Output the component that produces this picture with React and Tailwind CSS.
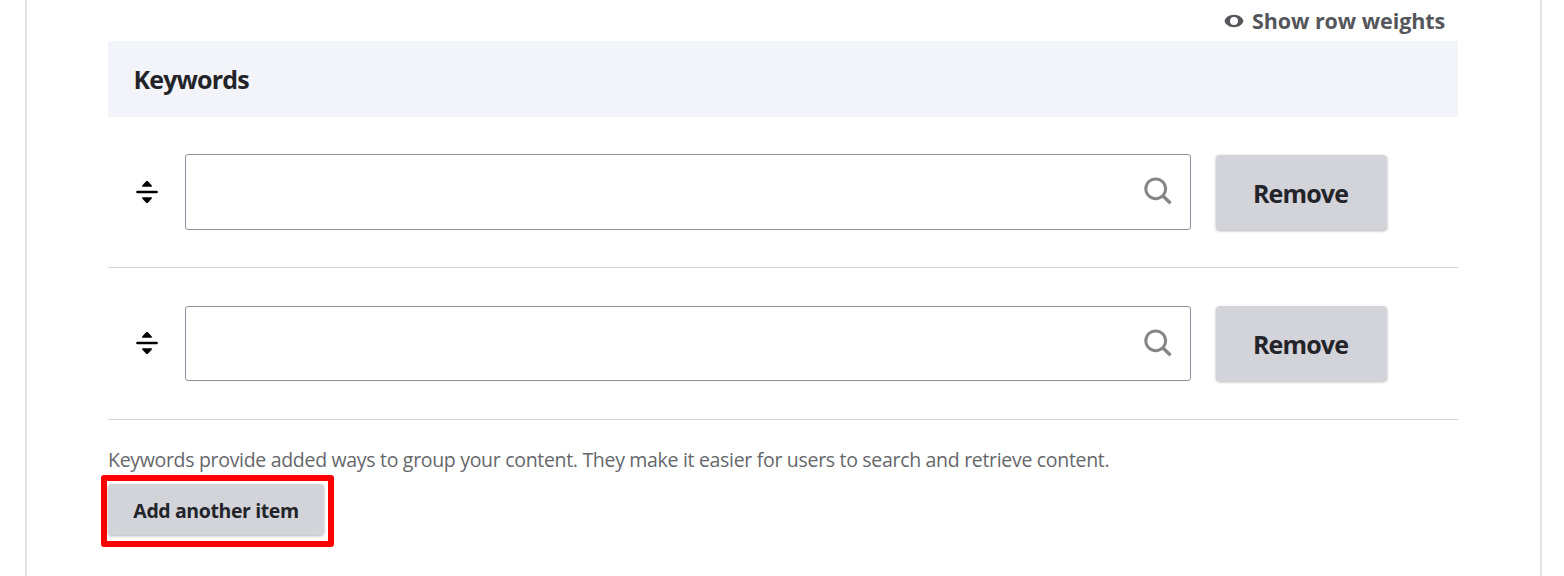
function EyeIcon() {
  return (
    <svg className="block h-[14px] w-5" viewBox="0 0 20 14" aria-hidden="true">
      <path
        fill="#55565b"
        fillRule="evenodd"
        d="M10 .8C5.200.8 1.300 3.600.6 7c.7 3.400 4.600 6.200 9.400 6.200s8.700-2.800 9.400-6.200C18.700 3.600 14.800.8 10 .8Zm0 2.200a4 4 0 1 1 0 8a4 4 0 0 1 0-8Z"
      />
    </svg>
  );
}

function DragIcon() {
  return (
    <svg className="block h-6 w-6" viewBox="0 0 24 24" aria-hidden="true">
      <path
        fill="#000"
        d="M12 1c.4 0 .7.100.9.300l3.700 3.900c.7.800.3 1.500-.6 1.500H8c-.9 0-1.300-.7-.6-1.500l3.700-3.900c.2-.2.500-.3.900-.3ZM12 23c.4 0 .7-.1.900-.3l3.700-3.900c.7-.8.300-1.500-.6-1.500H8c-.9 0-1.300.7-.6 1.500l3.700 3.900c.2.200.5.300.9.300Z"
      />
      <rect x="1.200" y="10.700" width="21.600" height="2.600" rx="1.100" fill="#000" />
    </svg>
  );
}

function SearchIcon() {
  return (
    <svg className="block h-[30px] w-[30px]" viewBox="0 0 30 30" fill="none" stroke="#868686" aria-hidden="true">
      <circle cx="12.700" cy="12.800" r="9.900" strokeWidth="3" />
      <path d="M19.500 19.600l8 7.600" strokeWidth="3.400" />
    </svg>
  );
}

function KeywordRow({ className, handleClassName, inputClassName, buttonClassName }) {
  return (
    <div className={`flex items-start border-b border-[#d3d4d9] ${className}`}>
      <div className={`ml-[27px] w-[50px] ${handleClassName}`}>
        <DragIcon />
      </div>
      <div
        className={`flex w-[1006px] justify-end rounded-[3px] border border-[#8e929c] bg-white pr-[17px] pt-[21px] ${inputClassName}`}
      >
        <SearchIcon />
      </div>
      <button
        className={`ml-[25px] w-[171px] rounded-[4px] bg-[#d3d4d9] pr-[2px] text-[25px] leading-[34px] font-bold tracking-[-0.85px] text-[#232429] shadow-[0_1px_3px_rgba(0,0,0,0.3)] ${buttonClassName}`}
      >
        Remove
      </button>
    </div>
  );
}

export default function App() {
  return (
    <div className="h-[576px] overflow-hidden bg-white pl-[25px] font-['Open_Sans','Noto_Sans',sans-serif]">
      <main className="h-full w-[1517px] border-x-2 border-[#e2e2e4] pl-[81px]">
        <div className="w-[1350px]">
          <div className="flex h-[41px] items-start justify-end pr-[13px]">
            <div className="mr-[8px] mt-[14px]">
              <EyeIcon />
            </div>
            <span className="mt-[7px] w-[193px] whitespace-nowrap text-[21.500px] leading-[28px] font-bold tracking-[-0.07px] text-[#55565b]">
              Show row weights
            </span>
          </div>
          <div className="flex h-[76px] items-center bg-[#f3f4f9] pl-[25.500px] pt-[2px] text-[25px] font-bold tracking-[-0.85px] text-[#232429]">
            Keywords
          </div>
          <KeywordRow
            className="h-[151px] pt-[37px]"
            handleClassName="mt-[26px]"
            inputClassName="h-[76px]"
            buttonClassName="mt-[1px] h-[75px] pt-0"
          />
          <KeywordRow
            className="h-[152px] pt-[38px]"
            handleClassName="mt-[25px]"
            inputClassName="h-[75px]"
            buttonClassName="h-[75px] pt-0"
          />
          <p className="mt-[26px] h-[29px] whitespace-nowrap text-[19.500px] leading-[28px] tracking-[-0.31px] text-[#66676b]">
            Keywords provide added ways to group your content. They make it easier for users to search and retrieve content.
          </p>
          <div className="-ml-[7px] h-[72px] w-[233px] rounded-[3px] border-[6px] border-[#ff0000] pl-[1px] pt-[3px]">
            <button className="h-[51px] w-[216px] rounded-[4px] bg-[#d3d4d9] pt-[2px] text-[19.500px] leading-[26px] font-bold tracking-[-0.4px] whitespace-nowrap text-[#232429] shadow-[0_1px_3px_rgba(0,0,0,0.3)]">
              Add another item
            </button>
          </div>
        </div>
      </main>
    </div>
  );
}
